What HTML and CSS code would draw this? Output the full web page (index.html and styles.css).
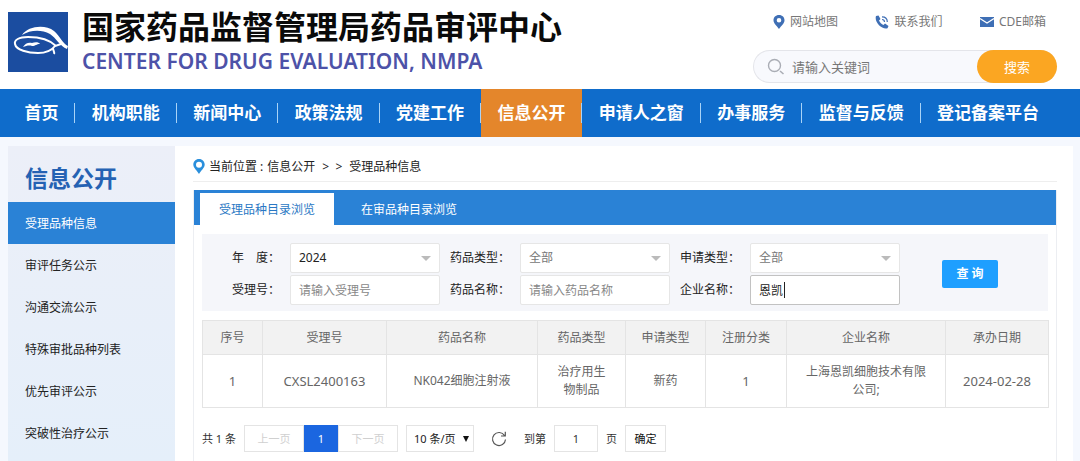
FILE: index.html
```html
<!DOCTYPE html>
<html lang="zh-CN">
<head>
  <meta charset="UTF-8" />
  <meta name="viewport" content="width=device-width, initial-scale=1.0" />
  <title>国家药品监督管理局药品审评中心</title>
  <link rel="stylesheet" href="styles.css">
</head>
<body>
  <header class="header">
    <a class="brand" href="#">
      <svg class="logo" viewBox="0 0 60 60" aria-hidden="true">
        <rect width="60" height="60" fill="#1b4da0"/>
        <path d="M14 23C20 14 37 12 46 19C52 24 55 32 60 34L59 37C52 34 48 26 42 22C33 17 22 18 14 23Z" fill="#fff"/>
        <path d="M48 34C41 27 29 25 20 25C11 25 6 28 7 32C8 38 20 41 30 41C38 41 44 38 47 34L53 32" fill="none" stroke="#fff" stroke-width="2"/>
        <path d="M45 36C45 39 47 40 46 42" fill="none" stroke="#fff" stroke-width="2"/>
        <path d="M15 35C17 31 21 30 24 31C27 30 31 30 32 32C28 32 28 34 24 34C21 33 18 34 15 35Z" fill="#fff"/>
      </svg>
      <span class="brand-text">
        <span class="brand-cn">国家药品监督管理局药品审评中心</span>
        <span class="brand-en">CENTER FOR DRUG EVALUATION, NMPA</span>
      </span>
    </a>

    <div class="header-right">
      <div class="top-links">
        <a href="#">
          <svg width="12" height="14" viewBox="0 0 12 14" aria-hidden="true"><path fill-rule="evenodd" d="M6 0C2.600 0 .5 2.300 .5 5.200C.5 8.500 4 11 6 14C8 11 11.500 8.500 11.500 5.200C11.500 2.300 9.400 0 6 0ZM6 3A2.300 2.300 0 1 1 6 7.600A2.300 2.300 0 1 1 6 3Z" fill="#3f6fb5"/></svg>
          网站地图
        </a>
        <a href="#">
          <svg width="14" height="14" viewBox="0 0 14 14" aria-hidden="true"><path d="M1 1L3.500 .5L5.500 4L4 5.500C5 7.500 6.500 9 8.500 10L10 8.500L13.500 11L12.500 13.300C7 15 -1 7 1 1Z" fill="#3f6fb5"/><path d="M7 4.500C8.500 4.500 9.500 5.500 9.500 7M7 1.800C10.500 1.800 12.300 4 12.300 7" fill="none" stroke="#3f6fb5" stroke-width="1.200"/></svg>
          联系我们
        </a>
        <a href="#">
          <svg width="14" height="10" viewBox="0 0 14 10" aria-hidden="true"><rect width="14" height="10" fill="#3f6fb5"/><path d="M0 1.500L7 6L14 1.500" fill="none" stroke="#fff" stroke-width="1.200"/></svg>
          CDE邮箱
        </a>
      </div>
      <form class="search">
        <svg width="18" height="18" viewBox="0 0 18 18" aria-hidden="true"><circle cx="7.500" cy="7.500" r="6" fill="none" stroke="#aaadb5" stroke-width="1.400"/><path d="M13 13L16.500 16" stroke="#aaadb5" stroke-width="1.600"/></svg>
        <input type="text" placeholder="请输入关键词" aria-label="请输入关键词" />
        <button type="button">搜索</button>
      </form>
    </div>
  </header>

  <nav class="nav">
    <a href="#">首页</a>
    <a href="#">机构职能</a>
    <a href="#">新闻中心</a>
    <a href="#">政策法规</a>
    <a href="#">党建工作</a>
    <a href="#" class="active">信息公开</a>
    <a href="#">申请人之窗</a>
    <a href="#">办事服务</a>
    <a href="#">监督与反馈</a>
    <a href="#">登记备案平台</a>
  </nav>

  <div class="content">
    <aside class="sidebar">
      <h2>信息公开</h2>
      <a href="#" class="active">受理品种信息</a>
      <a href="#">审评任务公示</a>
      <a href="#">沟通交流公示</a>
      <a href="#">特殊审批品种列表</a>
      <a href="#">优先审评公示</a>
      <a href="#">突破性治疗公示</a>
    </aside>

    <main class="main">
      <div class="breadcrumb">
        <svg width="12" height="15" viewBox="0 0 12 15" aria-hidden="true"><path fill-rule="evenodd" d="M6 0C2.600 0 .3 2.500 .3 5.600C.3 9 4 11.500 6 15C8 11.500 11.700 9 11.700 5.600C11.700 2.500 9.400 0 6 0ZM6 2.800A3 3 0 1 1 6 8.800A3 3 0 1 1 6 2.800Z" fill="#2a8fdc"/></svg>
        <span>当前位置 :</span>
        <a href="#">信息公开</a>
        <span class="arrows">&gt; &nbsp;&gt;</span>
        <a href="#">受理品种信息</a>
      </div>

      <section class="panel">
        <div class="tabs">
          <button type="button" class="active">受理品种目录浏览</button>
          <button type="button">在审品种目录浏览</button>
        </div>

        <form class="filter">
          <label for="year">年&emsp;度：</label>
          <div class="select dark"><select id="year"><option>2024</option></select></div>
          <label for="drugType">药品类型：</label>
          <div class="select"><select id="drugType"><option>全部</option></select></div>
          <label for="applyType">申请类型：</label>
          <div class="select"><select id="applyType"><option>全部</option></select></div>
          <label for="acceptNo">受理号：</label>
          <input type="text" id="acceptNo" placeholder="请输入受理号" />
          <label for="drugName">药品名称：</label>
          <input type="text" id="drugName" placeholder="请输入药品名称" />
          <label for="company">企业名称：</label>
          <div class="caret"><input type="text" id="company" value="恩凯" /></div>
          <button type="button" class="query">查 询</button>
        </form>

        <table class="list">
          <colgroup>
            <col class="c-index"><col class="c-no"><col class="c-name"><col class="c-type">
            <col class="c-apply"><col class="c-reg"><col class="c-company"><col class="c-date">
          </colgroup>
          <thead>
            <tr>
              <th>序号</th><th>受理号</th><th>药品名称</th><th>药品类型</th>
              <th>申请类型</th><th>注册分类</th><th>企业名称</th><th>承办日期</th>
            </tr>
          </thead>
          <tbody>
            <tr>
              <td class="num">1</td>
              <td class="num">CXSL2400163</td>
              <td>NK042细胞注射液</td>
              <td>治疗用生物制品</td>
              <td>新药</td>
              <td class="num">1</td>
              <td>上海恩凯细胞技术有限公司;</td>
              <td class="num">2024-02-28</td>
            </tr>
          </tbody>
        </table>

        <div class="pager">
          <span>共 1 条</span>
          <div class="pages">
            <button type="button" disabled>上一页</button>
            <button type="button" class="current">1</button>
            <button type="button" disabled>下一页</button>
          </div>
          <div class="select size"><select aria-label="每页条数"><option>10 条/页</option></select></div>
          <button type="button" class="refresh" aria-label="刷新">
            <svg width="16" height="16" viewBox="0 0 16 16" aria-hidden="true"><path d="M13.500 4.500A6.500 6.500 0 1 0 14.500 8.500M14.300 .8V5H10" fill="none" stroke="#555" stroke-width="1.200"/></svg>
          </button>
          <label for="page">到第</label>
          <input type="text" id="page" value="1" />
          <span>页</span>
          <button type="button" class="confirm">确定</button>
        </div>
      </section>
    </main>
  </div>
</body>
</html>
```
FILE: styles.css
```css
* {
  box-sizing: border-box;
}
body {
  display: flex;
  flex-direction: column;
  min-height: 100vh;
  margin: 0;
  background: #fff;
  color: #333;
  font-family: "Noto Sans", "Noto Sans CJK SC", sans-serif;
  font-size: 12px;
  line-height: 18px;
}
a {
  color: inherit;
  text-decoration: none;
}
button, input, select {
  margin: 0;
  font: inherit;
  color: inherit;
}
button {
  padding: 0;
  border: 0;
  background: none;
}
svg {
  flex: none;
}

/* header */
.header {
  display: flex;
  justify-content: space-between;
  height: 89px;
  padding: 0 23px 0 8px;
}
.brand {
  display: flex;
  gap: 14px;
}
.logo {
  width: 60px;
  height: 60px;
  margin-top: 12px;
}
.brand-text {
  display: flex;
  flex-direction: column;
  padding-top: 8px;
  white-space: nowrap;
}
.brand-cn {
  color: #0a0a0a;
  font-family: "Noto Sans CJK SC", sans-serif;
  font-size: 32px;
  font-weight: bold;
  line-height: 34px;
}
.brand-en {
  color: #4d52a8;
  font-size: 21px;
  font-weight: 600;
  line-height: 38px;
}
.header-right {
  width: 304px;
  padding-top: 13px;
}
.top-links {
  display: flex;
  justify-content: space-between;
  padding: 0 11px 0 20px;
  color: #777;
}
.top-links a {
  display: flex;
  align-items: center;
  gap: 5px;
}
.search {
  display: flex;
  align-items: center;
  height: 33px;
  margin-top: 19px;
  padding-left: 13px;
  border: 1px solid #e4e5ea;
  border-right: 0;
  border-radius: 17px;
  background: #f8f9fd;
  font-size: 13px;
}
.search input {
  flex: 1;
  min-width: 0;
  padding: 0 7px;
  border: 0;
  outline: 0;
  background: none;
}
.search input::placeholder {
  color: #777;
  opacity: 1;
}
.search button {
  width: 80px;
  height: 33px;
  border-radius: 17px;
  background: #fba622;
  color: #fff;
}

/* main menu */
.nav {
  display: flex;
  height: 48px;
  padding: 0 41px 0 8px;
  background: #0f6ccb;
  color: #fff;
  font-size: 17px;
  font-weight: bold;
  line-height: 48px;
  white-space: nowrap;
}
.nav a {
  display: flex;
  flex-grow: 1;
  align-items: center;
  justify-content: flex-end;
  padding-left: 16px;
}
.nav a::after {
  content: "";
  width: 1px;
  height: 20px;
  margin-left: 16px;
  background: #a9d3f7;
}
.nav a:last-child::after {
  display: none;
}
.nav .active {
  background: #e4862b;
}

/* content */
.content {
  display: flex;
  flex: 1;
  padding: 9px 7px 0 8px;
  background: #f5f8fe;
}
.sidebar {
  width: 167px;
  background: linear-gradient(#eceff8, #e5effa);
  color: #222;
}
.sidebar h2 {
  margin: 0;
  padding: 10px 17px 0;
  height: 56px;
  color: #2562b3;
  font-size: 23px;
  line-height: 44px;
}
.sidebar a {
  display: block;
  padding: 2px 17px 0;
  line-height: 40px;
}
.sidebar .active {
  background: #2a82d6;
  color: #fff;
}
.main {
  display: flex;
  flex: 1;
  flex-direction: column;
  min-width: 0;
  padding: 0 16px 0 18px;
  background: #fff;
}
.breadcrumb {
  display: flex;
  align-items: center;
  gap: 4px;
  height: 36px;
  padding-top: 6px;
  border-bottom: 1px solid #eee;
  color: #222;
}
.arrows {
  margin: 0 3px;
}
.panel {
  flex: 1;
  margin-top: 8px;
  border: 1px solid #eceef2;
  border-width: 0 1px;
}
.tabs {
  display: flex;
  height: 35px;
  padding: 3px 6px 0;
  background: #2a82d6;
}
.tabs button {
  padding: 2px 18px 0;
  min-width: 134px;
  color: #fff;
}
.tabs .active {
  margin-right: 8px;
  background: #fff;
  color: #2a78c4;
}

/* filter form */
.filter {
  display: grid;
  grid-template-columns: repeat(3, 80px 1fr) 140px;
  grid-template-rows: 30px 30px;
  row-gap: 2px;
  align-items: center;
  margin: 9px 8px 0;
  padding: 9px 8px 6px;
  background: #f5f6fa;
}
.filter label {
  padding-right: 10px;
  color: #222;
  text-align: right;
}
.filter input, .filter select {
  display: block;
  width: 100%;
  height: 30px;
  padding: 0 8px;
  border: 1px solid #e6e6e6;
  border-radius: 2px;
  outline: 0;
  background: #fff;
}
.filter input::placeholder {
  color: #888;
  opacity: 1;
}
.select {
  position: relative;
  color: #777;
}
.select select {
  appearance: none;
}
.select::after {
  content: "";
  position: absolute;
  top: 13px;
  right: 9px;
  border: 5px solid transparent;
  border-top-color: #bbb;
  pointer-events: none;
}
.dark {
  color: #222;
}
.caret {
  position: relative;
  color: #222;
}
.filter .caret input {
  border-color: #c2c2c2;
}
.caret::after {
  content: "";
  position: absolute;
  top: 7px;
  left: 34px;
  width: 1px;
  height: 16px;
  background: #222;
}
.query {
  grid-column: 7;
  grid-row: 1 / 3;
  justify-self: center;
  width: 56px;
  height: 28px;
  border-radius: 2px;
  background: #1e9fff;
  color: #fff;
  font-weight: bold;
}

/* result table */
.list {
  width: calc(100% - 16px);
  margin: 9px 8px 0;
  border-collapse: collapse;
  table-layout: fixed;
  color: #666;
}
.list th, .list td {
  padding: 8px 15px;
  border: 1px solid #e4e4e4;
  font-weight: normal;
  text-align: center;
}
.list th {
  padding: 8px 0 7px;
  background: #f2f2f2;
}
.list .num {
  padding: 8px 0;
  font-size: 13px;
}
.c-index { width: 60px; }
.c-no { width: 124px; }
.c-name { width: 151px; }
.c-type { width: 88px; }
.c-apply { width: 80px; }
.c-reg { width: 81px; }
.c-company { width: 159px; }
.c-date { width: 103px; }

/* pager */
.pager {
  display: flex;
  align-items: center;
  gap: 8px;
  margin: 17px 8px 0;
  font-size: 11px;
}
.pager button, .pager input, .pager select {
  height: 27px;
  border: 1px solid #e4e4e4;
  background: #fff;
}
.pages {
  display: flex;
}
.pages button {
  width: 60px;
  color: #d0d0d0;
}
.pager .current {
  width: 34px;
  border-color: #1b66e0;
  background: #1b66e0;
  color: #fff;
}
.size {
  color: #222;
}
.size select {
  width: 68px;
  padding: 0 7px;
}
.size::after {
  top: 11px;
  right: 5px;
  border: 3px solid transparent;
  border-top: 6px solid #111;
}
.pager .refresh {
  display: flex;
  align-items: center;
  margin: 0 8px;
  padding: 0 1px;
  border: 0;
}
.pager input {
  width: 44px;
  text-align: center;
}
.pager .confirm {
  width: 41px;
  color: #111;
}
```
